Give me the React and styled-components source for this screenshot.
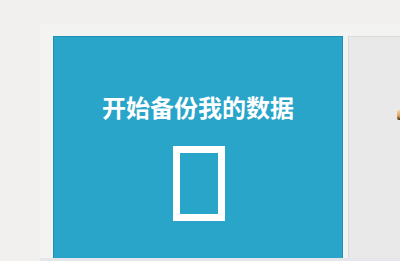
import React from "react";
import styled, { createGlobalStyle } from "styled-components";

const GlobalStyle = createGlobalStyle`
  html, body {
    margin: 0;
    padding: 0;
    background: #f1f0ee;
    overflow: hidden;
  }
  body {
    font-family: "Noto Sans CJK SC", "Noto Sans", sans-serif;
  }
`;

const Page = styled.div`
  width: 400px;
  height: 261px;
  padding: 24px 0 0 40px;
  box-sizing: border-box;
  overflow: hidden;
`;

const Stage = styled.div`
  display: flex;
  gap: 5px;
  height: 237px;
  padding: 12px 0 0 13px;
  box-sizing: border-box;
  background: #f3f3f2;
  width: 420px;
  border-bottom: 3px solid #e4e6ea;
`;

const Tile = styled.div`
  flex: none;
  width: 290px;
  height: 100%;
  box-sizing: border-box;
  border: 1px solid #1f90b1;
  border-bottom: none;
  background: #2aa5ca;
  display: flex;
  flex-direction: column;
  align-items: center;
  padding-top: 55px;
`;

const Title = styled.div`
  color: #ffffff;
  font-size: 24px;
  font-weight: 700;
  line-height: 30px;
`;

const Glyph = styled.svg`
  display: block;
  margin-top: 24px;
  margin-left: 2px;
`;

const SidePanel = styled.div`
  flex: none;
  width: 70px;
  height: 100%;
  box-sizing: border-box;
  border: 1px solid #d9d9d9;
  border-bottom: none;
  background: #e9e9e9;
  position: relative;
`;

const Peek = styled.div`
  position: absolute;
  left: 48px;
  top: 73px;
  width: 6px;
  height: 10px;
  border-radius: 2px 0 0 2px;
  background: linear-gradient(180deg, #f4d6a8 0%, #d9a25c 60%, #3a2a1c 100%);
`;

export default function App() {
  return (
    <>
      <GlobalStyle />
      <Page>
        <Stage>
          <Tile>
            <Title>开始备份我的数据</Title>
            <Glyph width="52" height="76" viewBox="0 0 52 76">
              <rect
                x="3.5"
                y="3.5"
                width="45"
                height="68"
                fill="none"
                stroke="#ffffff"
                strokeWidth="7"
              />
            </Glyph>
          </Tile>
          <SidePanel>
            <Peek />
          </SidePanel>
        </Stage>
      </Page>
    </>
  );
}
